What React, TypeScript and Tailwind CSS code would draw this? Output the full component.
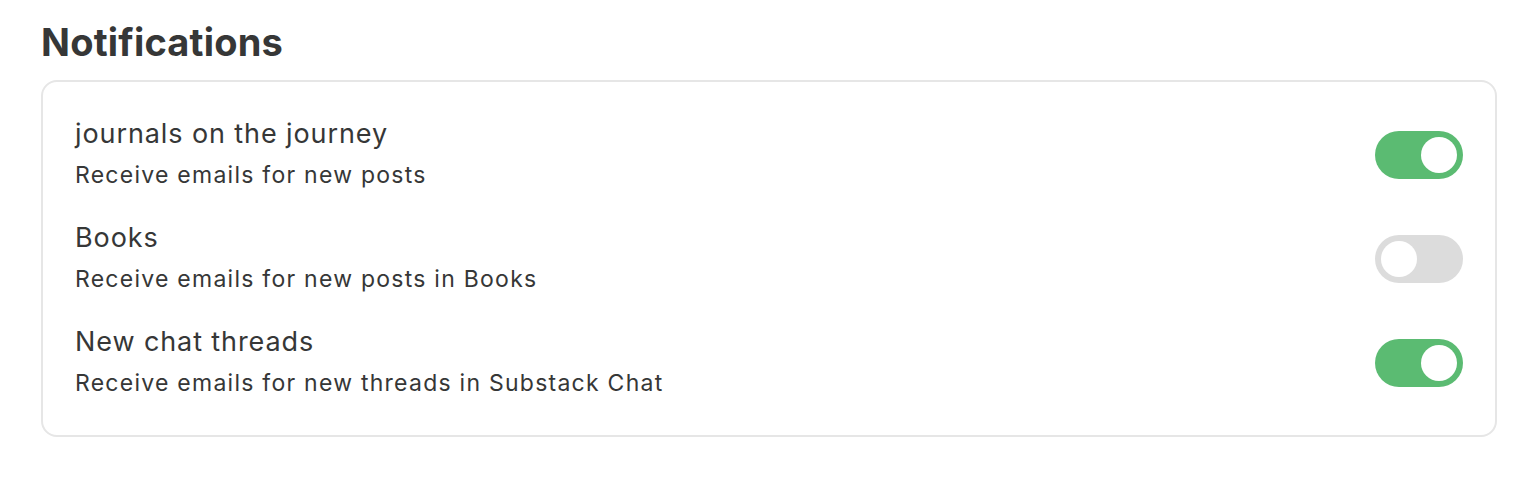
import { useState } from "react";

type Item = { title: string; desc: string; on: boolean };

const initial: Item[] = [
  { title: "journals on the journey", desc: "Receive emails for new posts", on: true },
  { title: "Books", desc: "Receive emails for new posts in Books", on: false },
  { title: "New chat threads", desc: "Receive emails for new threads in Substack Chat", on: true },
];

function Toggle({ on, onClick }: { on: boolean; onClick: () => void }) {
  return (
    <button
      onClick={onClick}
      className={`flex h-[48px] w-[88px] shrink-0 items-center rounded-full px-[6px] ${
        on ? "justify-end bg-[#5bbb72]" : "justify-start bg-[#dcdcdc]"
      }`}
    >
      <span className="block h-[36px] w-[36px] rounded-full bg-white" />
    </button>
  );
}

export default function App() {
  const [items, setItems] = useState(initial);

  const flip = (i: number) =>
    setItems((prev) => prev.map((it, j) => (j === i ? { ...it, on: !it.on } : it)));

  return (
    <div className="min-h-screen bg-white px-[41px] pt-[16px] font-['Inter',sans-serif] text-[#363737]">
      {/* Heading */}
      <h2 className="text-[38px] font-bold leading-[52px] tracking-[0.2px]">Notifications</h2>

      {/* Card */}
      <div className="mt-[12px] flex flex-col gap-[30px] rounded-[16px] border-2 border-[#e6e6e6] px-[32px] pt-[36px] pb-[35px]">
        {items.map((it, i) => (
          <div key={it.title} className="flex items-center justify-between">
            <div className="flex flex-col">
              <span className="text-[27px] leading-[32px] tracking-[0.9px]">{it.title}</span>
              <span className="mt-[8px] text-[23px] leading-[34px] tracking-[1.25px]">{it.desc}</span>
            </div>
            <Toggle on={it.on} onClick={() => flip(i)} />
          </div>
        ))}
      </div>
    </div>
  );
}
